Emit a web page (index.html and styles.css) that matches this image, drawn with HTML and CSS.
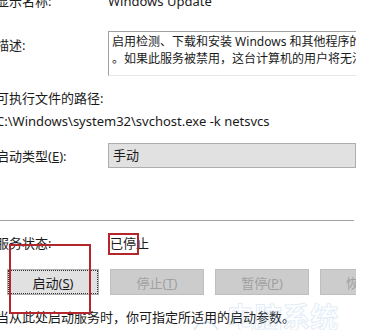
FILE: index.html
```
<!DOCTYPE html>
<html>
<head>
    <meta charset="UTF-8">
    <title>Windows Update 的属性</title>
    <link rel="stylesheet" href="styles.css">
</head>
<body>
    <div class="dialog">
        <div class="row name-row">
            <span class="label">显示名称:</span>
            <span class="value">Windows Update</span>
        </div>

        <div class="row desc-row">
            <span class="label">描述:</span>
            <div class="desc-box">
                <div class="desc-line">启用检测、下载和安装 Windows 和其他程序的更新。</div>
                <div class="desc-line">。如果此服务被禁用，这台计算机的用户将无法使用</div>
            </div>
        </div>

        <div class="path-label">可执行文件的路径:</div>
        <div class="path-value">C:\Windows\system32\svchost.exe -k netsvcs</div>

        <div class="row type-row">
            <span class="label">启动类型(<u>E</u>):</span>
            <div class="combo">手动</div>
        </div>

        <div class="separator"></div>

        <div class="row status-row">
            <span class="label">服务状态:</span>
            <span class="value">已停止</span>
        </div>

        <div class="buttons">
            <button class="btn btn-focus">启动(<u>S</u>)</button>
            <button class="btn" disabled>停止(<u>T</u>)</button>
            <button class="btn" disabled>暂停(<u>P</u>)</button>
            <button class="btn" disabled>恢复(<u>R</u>)</button>
        </div>

        <div class="hint">当从此处启动服务时，你可指定所适用的启动参数。</div>

        <!-- highlight marks drawn over the dialog -->
        <div class="mark mark-status"></div>
        <div class="mark mark-start"></div>

        <div class="watermark">
            <span class="wm-logo"></span>
            <span class="wm-text">电脑系统城</span>
        </div>
    </div>
</body>
</html>
```

FILE: styles.css
```
body {
    margin: 0;
    background: white;
    font-family: "Noto Sans", "Noto Sans CJK SC", sans-serif;
    font-size: 13px;
    color: #1a1a1a;
    overflow: hidden;
}

.dialog {
    position: relative;
    width: 360px;
    height: 338px;
    margin-left: -4px;
    margin-top: -8px;
    overflow: hidden;
}

.row {
    display: grid;
    grid-template-columns: 112px 1fr;
    align-items: center;
}

.name-row {
    height: 18px;
    line-height: 18px;
}

.desc-row {
    margin-top: 21px;
    align-items: start;
}

.desc-row .label {
    line-height: 17px;
    padding-top: 6px;
}

.desc-box {
    width: 270px;
    height: 45px;
    border-top: 1px solid #a0a0a0;
    border-left: 1px solid #a0a0a0;
    border-bottom: 1px solid #e6e6e6;
    padding: 1px 0 0 3px;
    box-sizing: border-box;
    font-size: 12px;
    line-height: 17px;
    overflow: hidden;
}

.desc-line {
    white-space: nowrap;
}

.path-label {
    margin-top: 14px;
    line-height: 17px;
}

.path-value {
    margin-top: 6px;
    line-height: 17px;
    white-space: nowrap;
}

.type-row {
    margin-top: 13px;
}

.combo {
    height: 25px;
    line-height: 23px;
    box-sizing: border-box;
    border: 1px solid #adadad;
    background: #e1e1e1;
    padding-left: 4px;
}

.separator {
    margin-top: 52px;
    height: 1px;
    width: 358px;
    background: #a0a0a0;
}

.status-row {
    margin-top: 11px;
    line-height: 22px;
}

.status-row .value {
    padding-left: 2px;
}

.buttons {
    display: flex;
    gap: 11px;
    margin-top: 15px;
    padding-left: 11px;
    white-space: nowrap;
}

.btn {
    flex: none;
    width: 94px;
    height: 26px;
    font-family: inherit;
    font-size: 13px;
    color: #1a1a1a;
    background: #e1e1e1;
    border: 1px solid #adadad;
    padding: 0;
}

.btn-focus {
    width: 92px;
    outline: 1px dotted #333;
    outline-offset: -2px;
}

.btn:disabled {
    background: #cccccc;
    border-color: #bfbfbf;
    color: #a0a0a0;
}

.hint {
    margin-top: 14px;
    line-height: 17px;
    white-space: nowrap;
}

.mark {
    position: absolute;
    border: 2px solid #b3262c;
    box-sizing: border-box;
}

.mark-status {
    left: 112px;
    top: 241px;
    width: 31px;
    height: 22px;
}

.mark-start {
    left: 13px;
    top: 252px;
    width: 82px;
    height: 70px;
}

.watermark {
    position: absolute;
    left: 196px;
    top: 304px;
    display: flex;
    align-items: center;
    gap: 6px;
    opacity: 0.25;
}

.wm-logo {
    width: 26px;
    height: 26px;
    border: 2px solid #8fb8e0;
    border-radius: 50%;
}

.wm-text {
    font-size: 28px;
    font-weight: bold;
    color: transparent;
    -webkit-text-stroke: 1px #8fb8e0;
}
```
